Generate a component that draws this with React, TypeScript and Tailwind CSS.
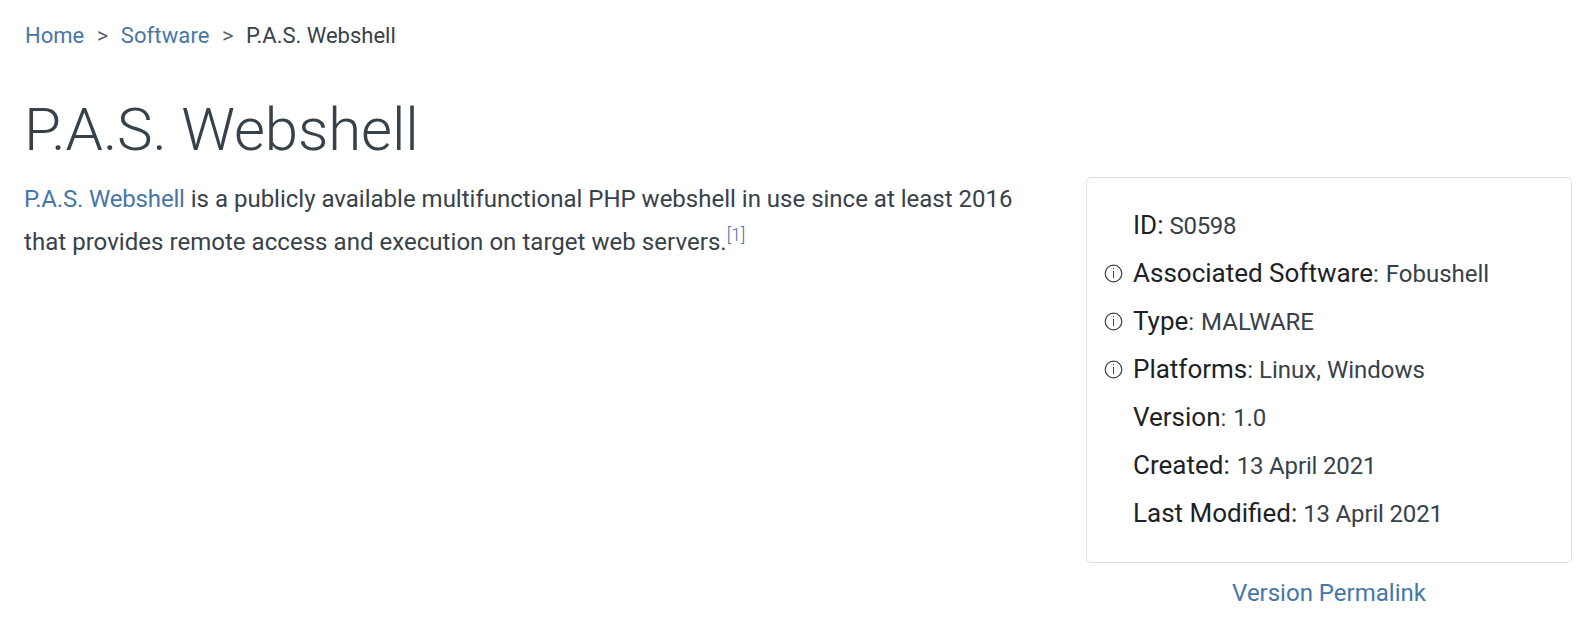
import React from "react";

const link = "text-[#4776a9]";

function InfoIcon() {
  return (
    <svg width="19" height="19" viewBox="0 0 19 19" fill="none" className="block">
      <circle cx="9.5" cy="9.5" r="8.3" stroke="#39434c" strokeWidth="1.2" />
      <path d="M9.5 4v1.4M9.5 7v7" stroke="#39434c" strokeWidth="1" />
    </svg>
  );
}

const rows = [
  { label: "ID:", value: "S0598", spacing: "tracking-[-0.25px]" },
  { label: "Associated Software", value: "Fobushell", info: true, colon: true, spacing: "ml-px" },
  { label: "Type", value: "MALWARE", info: true, colon: true, spacing: "ml-px" },
  { label: "Platforms", value: "Linux, Windows", info: true, colon: true, spacing: "" },
  { label: "Version", value: "1.0", colon: true, spacing: "ml-px tracking-[-0.2px]" },
  { label: "Created:", value: "13 April 2021", spacing: "ml-px tracking-[-0.16px]" },
  { label: "Last Modified:", value: "13 April 2021", spacing: "tracking-[-0.16px]" },
];

export default function App() {
  return (
    <div className="h-[632px] w-full overflow-hidden bg-white pl-6 pr-[21px] font-[Roboto,sans-serif] text-[#37414a]">
      <nav className="flex h-[70px] items-center gap-[12.5px] pl-px text-[22px]">
        <a className={link}>Home</a>
        <span className="text-[#5f676d]">&gt;</span>
        <a className={`tracking-[0.12px] ${link}`}>Software</a>
        <span className="text-[#5f676d]">&gt;</span>
        <span>P.A.S. Webshell</span>
      </nav>
      <h1 className="h-[107px] pt-[22px] text-[60px] font-light leading-[76px] tracking-[-0.14px]">P.A.S. Webshell</h1>
      <div className="flex justify-between">
        <p className="w-[1020px] whitespace-nowrap pt-px text-[24px] leading-[43px]">
          <a className={`tracking-[-0.17px] ${link}`}>P.A.S. Webshell</a>
          <span> is a publicly available multifunctional PHP webshell in use since at least 2016</span>
          <br />
          <span className="tracking-[0.04px]">that provides remote access and execution on target web servers.</span>
          <sup className={`text-[18px] font-light leading-none ${link}`}>[1]</sup>
        </p>
        <aside className="w-[486px]">
          <div className="h-[386px] rounded-[5px] border border-[#dfdfdf] pl-[17px] pt-[23px]">
            {rows.map((r) => (
              <div key={r.label} className="flex h-12 items-center">
                <div className="w-[29px] pt-px">{r.info && <InfoIcon />}</div>
                <div className="whitespace-nowrap text-[24px]">
                  <span className="text-[26px] text-[#1c2226]">{r.label}</span>
                  {r.colon && ":"} <span className={r.spacing}>{r.value}</span>
                </div>
              </div>
            ))}
          </div>
          <div className={`pt-3 text-center text-[24px] ${link}`}>Version Permalink</div>
        </aside>
      </div>
    </div>
  );
}
